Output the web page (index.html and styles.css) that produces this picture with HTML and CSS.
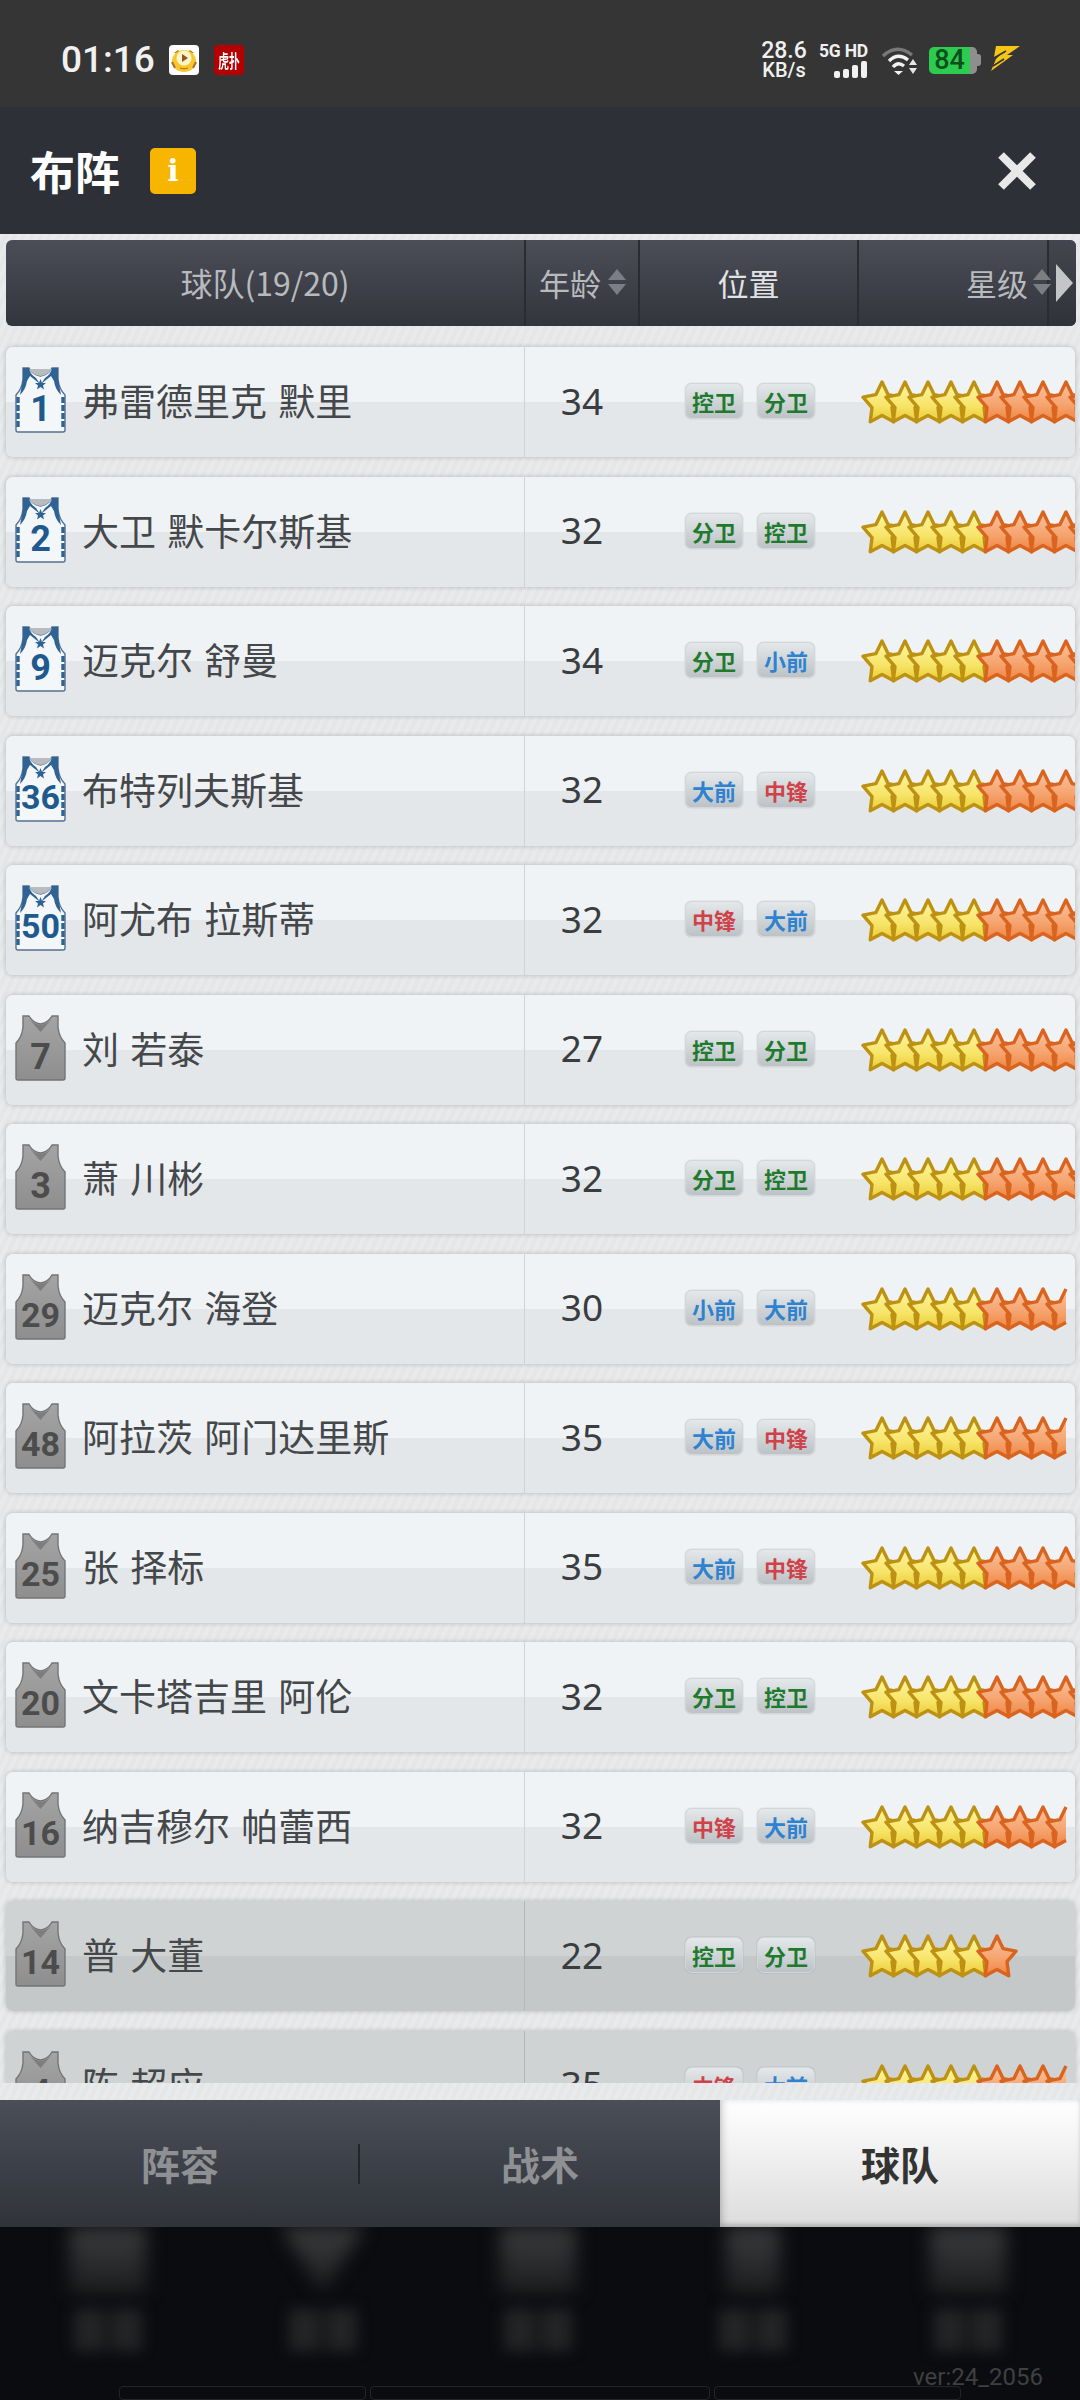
FILE: index.html
```html
<!DOCTYPE html>
<html>
  <head>
    <meta charset="utf-8" />
    <title>布阵</title>
    <link rel="stylesheet" href="styles.css">
  </head>
  <body>
    <svg class="defs" width="0" height="0">
      <defs>
        <linearGradient id="goldFill" x1="0" y1="0" x2="0" y2="1">
          <stop offset="0" stop-color="#fdf6a4" />
          <stop offset="0.6" stop-color="#f7e468" />
          <stop offset="1" stop-color="#e8ca34" />
        </linearGradient>
        <linearGradient id="orangeFill" x1="0" y1="0" x2="0" y2="1">
          <stop offset="0" stop-color="#fac3a0" />
          <stop offset="0.6" stop-color="#f5a26c" />
          <stop offset="1" stop-color="#ee8542" />
        </linearGradient>
        <linearGradient id="greyShirt" x1="0" y1="0" x2="0" y2="1">
          <stop offset="0" stop-color="#a4a4a4" />
          <stop offset="1" stop-color="#8e8e8e" />
        </linearGradient>
        <polygon id="star" points="21,2 27.17,14.7 40.02,17.2 30.99,27.55 32.76,41.8 21,35.5 9.24,41.8 11.01,27.55 1.98,17.2 14.83,14.7" />
        <g id="goldStar"><use href="#star" class="star-gold" /></g>
        <g id="orangeStar"><use href="#star" class="star-orange" /></g>
        <g id="fiveGold">
          <use href="#goldStar" x="0" />
          <use href="#goldStar" x="23" />
          <use href="#goldStar" x="46" />
          <use href="#goldStar" x="69" />
          <use href="#goldStar" x="92" />
        </g>
        <g id="stars-6">
          <use href="#fiveGold" />
          <use href="#orangeStar" x="115" />
        </g>
        <g id="stars-8">
          <use href="#stars-6" />
          <use href="#orangeStar" x="138" />
          <use href="#orangeStar" x="161" />
        </g>
        <g id="stars-9">
          <use href="#stars-8" />
          <use href="#orangeStar" x="184" />
        </g>
        <g id="stars-10">
          <use href="#stars-9" />
          <use href="#orangeStar" x="207" />
        </g>
        <g id="stars-half">
          <use href="#stars-8" />
          <path class="star-orange" transform="translate(184 0)" d="M21 2L14.83 14.7L1.98 17.2L11.01 27.55L9.24 41.8L21 35.5" />
        </g>
        <g id="shirtHome">
          <path d="M8 1L14 1Q18 8 25.5 9Q33 8 37 1L43 1L43 12Q44 22 50 28L50 63Q50 65 48 65L3 65Q1 65 1 63L1 28Q7 22 8 12Z" fill="#f3f7fa" stroke="#55708e" stroke-width="1.4" />
          <path d="M14 2Q18 8 25.5 9Q33 8 37 2Z" fill="#b9bcbf" />
          <path d="M8 1L14 1Q15 7 21 11L25 17L15 9L12 14Q11 22 5 28L8 12Z" fill="#2f6394" />
          <path d="M43 1L37 1Q36 7 30 11L26 17L36 9L39 14Q40 22 46 28L43 12Z" fill="#2f6394" />
          <polygon points="25.5,12 27,16 31,16 28,18.5 29,22.5 25.5,20 22,22.5 23,18.5 20,16 24,16" fill="#2f6394" />
          <path d="M3 30L3 62M48 30L48 62" stroke="#2f6394" stroke-width="3.4" stroke-dasharray="6 2" fill="none" />
        </g>
        <g id="shirtAway">
          <path d="M8 1L14 1Q18 8 25.5 9Q33 8 37 1L43 1L43 12Q44 22 50 28L50 63Q50 65 48 65L3 65Q1 65 1 63L1 28Q7 22 8 12Z" fill="url(#greyShirt)" stroke="#747474" stroke-width="1.4" />
          <path d="M15 5Q19 9 25.5 10Q32 9 36 5L25.5 17Z" fill="#7d7d7d" />
        </g>
      </defs>
    </svg>

    <div class="status-bar">
      <span class="clock">01:16</span>
      <svg class="app-icon" viewBox="0 0 30 30">
        <rect width="30" height="30" rx="4" fill="#fff" />
        <path d="M5 8L9 5L12 8M25 8L21 5L18 8" fill="#a8702c" />
        <ellipse cx="15" cy="16" rx="12" ry="11" fill="#f7c92e" />
        <circle cx="15" cy="13" r="7.5" fill="#fff4c8" />
        <polygon points="13,9 13,17 19,13" fill="#8a5726" />
        <path d="M3 17L6 23M27 17L24 23" stroke="#a8702c" stroke-width="2" />
        <path d="M11 23Q15 25 19 23" stroke="#a8702c" stroke-width="1" fill="none" />
      </svg>
      <div class="app-badge"><span>虎扑</span></div>
      <div class="status-right">
        <div class="net-speed">
          <span class="speed-num">28.6</span>
          <span class="speed-unit">KB/s</span>
        </div>
        <div class="net-type">
          <span>5G HD</span>
          <div class="signal">
            <i class="bar-1"></i><i class="bar-2"></i><i class="bar-3"></i><i class="bar-4"></i>
          </div>
        </div>
        <svg class="wifi" viewBox="0 0 36 29" width="36" height="29">
          <path d="M2 10Q16 -3 31 9" stroke="#787878" stroke-width="3.4" fill="none" />
          <path d="M8 15Q17 6 27 14" stroke="#f2f2f2" stroke-width="3.4" fill="none" />
          <path d="M12 21Q17 15 23 20" stroke="#f2f2f2" stroke-width="3.4" fill="none" />
          <polygon points="13,25 22,25 17.5,29" fill="#f2f2f2" />
          <polygon points="32,13 36,19 28,19" fill="#e6e6e6" />
          <polygon points="28,22 36,22 32,28" fill="#e6e6e6" />
        </svg>
        <div class="battery">
          <div class="battery-body"><span>84</span></div>
          <i class="battery-nub"></i>
        </div>
        <svg class="bolt" viewBox="0 0 29 25" width="29" height="25">
          <polygon points="5,0 29,0 16,9 22,9 0,25 5,13 9,9 3,11" fill="#f5c518" />
          <path d="M3 12L15 5M2 20L13 13" stroke="#353535" stroke-width="1.6" />
        </svg>
      </div>
    </div>

    <div class="title-bar">
      <h1>布阵</h1>
      <span class="info-badge">i</span>
      <svg class="close" viewBox="0 0 40 40" width="40" height="40">
        <path d="M4 4L36 36M36 4L4 36" stroke="#e8e8e8" stroke-width="8" />
      </svg>
    </div>

    <div class="panel">
      <div class="table-head">
        <div class="head-cell head-team">球队(19/20)</div>
        <div class="head-cell head-age">年龄<i class="sort"></i></div>
        <div class="head-cell head-pos">位置</div>
        <div class="head-cell head-stars">星级<i class="sort"></i></div>
        <div class="head-more"><i></i></div>
      </div>

      <div class="list">
        <div class="row">
          <div class="cell-name"><svg class="shirt"><use href="#shirtHome" /><text x="25.5" y="54" class="no no-home">1</text></svg><span>弗雷德里克 默里</span></div>
          <div class="cell-age">34</div>
          <div class="cell-pos"><span class="tag guard">控卫</span><span class="tag guard">分卫</span></div>
          <svg class="stars"><use href="#stars-10" /></svg>
        </div>
        <div class="row">
          <div class="cell-name"><svg class="shirt"><use href="#shirtHome" /><text x="25.5" y="54" class="no no-home">2</text></svg><span>大卫 默卡尔斯基</span></div>
          <div class="cell-age">32</div>
          <div class="cell-pos"><span class="tag guard">分卫</span><span class="tag guard">控卫</span></div>
          <svg class="stars"><use href="#stars-10" /></svg>
        </div>
        <div class="row">
          <div class="cell-name"><svg class="shirt"><use href="#shirtHome" /><text x="25.5" y="54" class="no no-home">9</text></svg><span>迈克尔 舒曼</span></div>
          <div class="cell-age">34</div>
          <div class="cell-pos"><span class="tag guard">分卫</span><span class="tag forward">小前</span></div>
          <svg class="stars"><use href="#stars-10" /></svg>
        </div>
        <div class="row">
          <div class="cell-name"><svg class="shirt"><use href="#shirtHome" /><text x="25.5" y="53" class="no no-home two">36</text></svg><span>布特列夫斯基</span></div>
          <div class="cell-age">32</div>
          <div class="cell-pos"><span class="tag forward">大前</span><span class="tag center">中锋</span></div>
          <svg class="stars"><use href="#stars-9" /></svg>
        </div>
        <div class="row">
          <div class="cell-name"><svg class="shirt"><use href="#shirtHome" /><text x="25.5" y="53" class="no no-home two">50</text></svg><span>阿尤布 拉斯蒂</span></div>
          <div class="cell-age">32</div>
          <div class="cell-pos"><span class="tag center">中锋</span><span class="tag forward">大前</span></div>
          <svg class="stars"><use href="#stars-10" /></svg>
        </div>
        <div class="row">
          <div class="cell-name"><svg class="shirt"><use href="#shirtAway" /><text x="25.5" y="54" class="no">7</text></svg><span>刘 若泰</span></div>
          <div class="cell-age">27</div>
          <div class="cell-pos"><span class="tag guard">控卫</span><span class="tag guard">分卫</span></div>
          <svg class="stars"><use href="#stars-10" /></svg>
        </div>
        <div class="row">
          <div class="cell-name"><svg class="shirt"><use href="#shirtAway" /><text x="25.5" y="54" class="no">3</text></svg><span>萧 川彬</span></div>
          <div class="cell-age">32</div>
          <div class="cell-pos"><span class="tag guard">分卫</span><span class="tag guard">控卫</span></div>
          <svg class="stars"><use href="#stars-10" /></svg>
        </div>
        <div class="row">
          <div class="cell-name"><svg class="shirt"><use href="#shirtAway" /><text x="25.5" y="53" class="no two">29</text></svg><span>迈克尔 海登</span></div>
          <div class="cell-age">30</div>
          <div class="cell-pos"><span class="tag forward">小前</span><span class="tag forward">大前</span></div>
          <svg class="stars"><use href="#stars-half" /></svg>
        </div>
        <div class="row">
          <div class="cell-name"><svg class="shirt"><use href="#shirtAway" /><text x="25.5" y="53" class="no two">48</text></svg><span>阿拉茨 阿门达里斯</span></div>
          <div class="cell-age">35</div>
          <div class="cell-pos"><span class="tag forward">大前</span><span class="tag center">中锋</span></div>
          <svg class="stars"><use href="#stars-half" /></svg>
        </div>
        <div class="row">
          <div class="cell-name"><svg class="shirt"><use href="#shirtAway" /><text x="25.5" y="53" class="no two">25</text></svg><span>张 择标</span></div>
          <div class="cell-age">35</div>
          <div class="cell-pos"><span class="tag forward">大前</span><span class="tag center">中锋</span></div>
          <svg class="stars"><use href="#stars-9" /></svg>
        </div>
        <div class="row">
          <div class="cell-name"><svg class="shirt"><use href="#shirtAway" /><text x="25.5" y="53" class="no two">20</text></svg><span>文卡塔吉里 阿伦</span></div>
          <div class="cell-age">32</div>
          <div class="cell-pos"><span class="tag guard">分卫</span><span class="tag guard">控卫</span></div>
          <svg class="stars"><use href="#stars-10" /></svg>
        </div>
        <div class="row">
          <div class="cell-name"><svg class="shirt"><use href="#shirtAway" /><text x="25.5" y="53" class="no two">16</text></svg><span>纳吉穆尔 帕蕾西</span></div>
          <div class="cell-age">32</div>
          <div class="cell-pos"><span class="tag center">中锋</span><span class="tag forward">大前</span></div>
          <svg class="stars"><use href="#stars-half" /></svg>
        </div>
        <div class="row row-off">
          <div class="cell-name"><svg class="shirt"><use href="#shirtAway" /><text x="25.5" y="53" class="no two">14</text></svg><span>普 大董</span></div>
          <div class="cell-age">22</div>
          <div class="cell-pos"><span class="tag guard">控卫</span><span class="tag guard">分卫</span></div>
          <svg class="stars"><use href="#stars-6" /></svg>
        </div>
        <div class="row row-off">
          <div class="cell-name"><svg class="shirt"><use href="#shirtAway" /><text x="25.5" y="54" class="no">4</text></svg><span>陈 超应</span></div>
          <div class="cell-age">35</div>
          <div class="cell-pos"><span class="tag center">中锋</span><span class="tag forward">大前</span></div>
          <svg class="stars"><use href="#stars-half" /></svg>
        </div>
      </div>
    </div>

    <div class="tabs">
      <div class="tab tab-first">阵容</div>
      <div class="tab">战术</div>
      <div class="tab tab-on">球队</div>
    </div>

    <div class="dock">
      <div class="dock-items">
        <div class="dock-item"><i class="ghost-icon"></i><i class="ghost-label"></i></div>
        <div class="dock-item"><i class="ghost-v"><b></b></i><i class="ghost-label"></i></div>
        <div class="dock-item"><i class="ghost-icon"></i><i class="ghost-label"></i></div>
        <div class="dock-item"><i class="ghost-icon ghost-small"></i><i class="ghost-label"></i></div>
        <div class="dock-item"><i class="ghost-icon"></i><i class="ghost-label"></i></div>
      </div>
      <div class="dock-slots"><i class="slot"></i><i class="slot slot-wide"></i><i class="slot"></i></div>
      <span class="version">ver:24_2056</span>
    </div>
  </body>
</html>
```

FILE: styles.css
```css
html {
  margin: 0px;
  padding: 0px;
}
body {
  font-family: 'Noto Sans CJK SC', 'Noto Sans', sans-serif;
  margin: 0px;
  padding: 0px;
  width: 1080px;
  height: 2400px;
  overflow: hidden;
  display: flex;
  flex-direction: column;
  background-color: #0b0c0f;
}
.defs {
  position: absolute;
}
i {
  display: block;
}

/* status bar */
.status-bar {
  height: 107px;
  flex: none;
  display: flex;
  align-items: center;
  padding: 13px 60px 0px 61px;
  background-color: #353535;
  color: #f0f0f0;
  box-sizing: border-box;
}
.clock {
  font-family: 'Roboto', sans-serif;
  font-size: 37px;
  font-weight: 500;
  width: 108px;
  margin-top: -1px;
}
.app-icon {
  width: 30px;
  height: 30px;
  margin-right: 15px;
}
.app-badge {
  width: 30px;
  height: 30px;
  line-height: 30px;
  border-radius: 4px;
  background-color: #b40000;
  color: #fff;
  font-size: 18px;
  font-weight: 700;
  text-align: center;
  overflow: hidden;
}
.app-badge span {
  display: block;
  white-space: nowrap;
  margin-left: -3px;
  width: 36px;
  transform: scaleX(0.6);
}
.status-right {
  margin-left: auto;
  display: flex;
  align-items: center;
}
.net-speed {
  display: flex;
  flex-direction: column;
  align-items: center;
  font-family: 'Roboto', sans-serif;
  font-weight: 500;
  width: 46px;
  margin-right: 12px;
}
.speed-num {
  font-size: 23px;
  line-height: 21px;
}
.speed-unit {
  font-size: 20px;
  line-height: 19px;
}
.net-type {
  width: 48px;
  margin-right: 14px;
  font-family: 'Roboto', sans-serif;
  font-size: 17.5px;
  font-weight: 700;
  letter-spacing: -0.2px;
  line-height: 17px;
  white-space: nowrap;
}
.signal {
  display: flex;
  justify-content: flex-end;
  align-items: flex-end;
  gap: 3px;
  height: 17px;
  margin-top: 1px;
}
.signal i {
  width: 6px;
  background-color: #f2f2f2;
  border-radius: 2px;
}
.bar-1 {
  height: 7px;
}
.bar-2 {
  height: 9px;
}
.bar-3 {
  height: 13px;
}
.bar-4 {
  height: 17px;
}
.wifi {
  margin-right: 12px;
}
.battery {
  display: flex;
  align-items: center;
  margin-right: 10px;
}
.battery-body {
  width: 48px;
  height: 27px;
  border-radius: 5px;
  background: linear-gradient(90deg, #2dcb4f 41px, #8e8e8e 41px);
}
.battery-body span {
  display: block;
  width: 41px;
  text-align: center;
  font-family: 'Roboto', sans-serif;
  font-size: 27px;
  font-weight: 500;
  line-height: 27px;
  color: #0c4f1c;
}
.battery-nub {
  width: 4px;
  height: 12px;
  background-color: #8e8e8e;
  border-radius: 0px 3px 3px 0px;
}
.bolt {
  margin-bottom: 3px;
}

/* title */
.title-bar {
  height: 127px;
  flex: none;
  display: flex;
  align-items: center;
  padding: 0px 43px 0px 30px;
  background-color: #2d3037;
  box-sizing: border-box;
}
.title-bar h1 {
  margin: 0px 30px 0px 0px;
  font-size: 45px;
  font-weight: 700;
  line-height: 50px;
  color: #fff;
}
.info-badge {
  width: 46px;
  height: 46px;
  line-height: 46px;
  border-radius: 5px;
  background-color: #f8b500;
  color: #fff;
  font-family: 'DejaVu Serif', serif;
  font-size: 30px;
  font-weight: 700;
  text-align: center;
}
.close {
  margin-left: auto;
}

/* table */
.panel {
  height: 1866px;
  flex: none;
  display: flex;
  flex-direction: column;
  box-sizing: border-box;
  padding: 6px 0px 17px 0px;
  background: repeating-linear-gradient(115deg, #e9eaec 0px, #e9eaec 4px, #e5e6e8 4px, #e5e6e8 8px);
}
.table-head {
  height: 86px;
  flex: none;
  margin: 0px 4px 0px 6px;
  display: flex;
  border-radius: 6px;
  background: linear-gradient(#4b4e57, #32353c);
  color: #b8babd;
  font-size: 31px;
  overflow: hidden;
}
.head-cell {
  display: flex;
  align-items: center;
  box-sizing: border-box;
  border-right: 2px solid #2a2c32;
  padding-bottom: 2px;
}
.head-team {
  width: 520px;
  justify-content: center;
  font-size: 32px;
}
.head-age {
  width: 114px;
  padding-left: 13px;
  gap: 7px;
}
.head-pos {
  width: 219px;
  justify-content: center;
  color: #e2e3e5;
}
.head-stars {
  width: 188px;
  justify-content: flex-end;
  gap: 5px;
  border-right: none;
}
.head-stars .sort {
  margin-right: -4px;
  z-index: 1;
}
.sort {
  width: 0px;
  border-left: 9px solid transparent;
  border-right: 9px solid transparent;
  border-bottom: 11px solid #7c7e83;
  position: relative;
  height: 0px;
  margin-bottom: 15px;
}
.sort::after {
  content: "";
  position: absolute;
  left: -9px;
  top: 15px;
  border-left: 9px solid transparent;
  border-right: 9px solid transparent;
  border-top: 11px solid #7c7e83;
}
.head-more {
  flex: 1;
  display: flex;
  align-items: center;
  justify-content: center;
  border-left: 2px solid #2a2c32;
  background: linear-gradient(#43464e, #2f3238);
}
.head-more i {
  border-left: 17px solid #c4c5c8;
  border-top: 19px solid transparent;
  border-bottom: 19px solid transparent;
  margin-left: 4px;
}
.list {
  flex: 1;
  min-height: 0px;
  overflow: hidden;
  display: flex;
  flex-direction: column;
  gap: 19.5px;
  padding: 21px 5px 0px 6px;
}
.row {
  height: 110px;
  flex: none;
  display: flex;
  align-items: center;
  border-radius: 7px;
  overflow: hidden;
  color: #45484b;
  background: linear-gradient(#eff3f5 50%, #e4e7e9 50%);
  box-shadow: 0px 0px 5px rgba(0, 0, 0, 0.22);
}
.row-off {
  background: linear-gradient(#cfd3d4 50%, #c4c8c9 50%);
}
.cell-name {
  width: 519px;
  height: 100%;
  flex: none;
  display: flex;
  align-items: center;
  gap: 16px;
  padding-left: 9px;
  box-sizing: border-box;
  font-size: 37px;
  word-spacing: 3px;
  border-right: 1px solid #cfd3d5;
  white-space: nowrap;
}
.cell-name span {
  margin-bottom: 4px;
}
.row-off .cell-name {
  border-right-color: #b4b8b9;
}
.shirt {
  width: 51px;
  height: 66px;
  flex: none;
  margin-bottom: 4px;
}
.no {
  font-family: 'Roboto', sans-serif;
  font-size: 36px;
  font-weight: 700;
  fill: #4c4c4c;
  text-anchor: middle;
}
.no.two {
  font-size: 34px;
}
.no-home {
  fill: #1f5a8e;
}
.cell-age {
  width: 114px;
  flex: none;
  text-align: center;
  font-family: 'Noto Sans', sans-serif;
  font-size: 37px;
  color: #3a3d40;
  margin-bottom: 4px;
}
.cell-pos {
  width: 219px;
  flex: none;
  display: flex;
  gap: 14px;
  padding-left: 46px;
  box-sizing: border-box;
  margin-bottom: 2px;
}
.tag {
  width: 58px;
  height: 36px;
  line-height: 34px;
  box-sizing: border-box;
  border: 1px solid #d3d7d9;
  border-radius: 7px;
  background: linear-gradient(#e4e8ea, #bcc2c6);
  box-shadow: 0px 0px 1px rgba(0, 0, 0, 0.4);
  text-align: center;
  font-size: 22px;
  font-weight: 700;
}
.guard {
  color: #1f7a2e;
}
.forward {
  color: #2f82d0;
}
.center {
  color: #d0424a;
}
.stars {
  width: 214px;
  height: 46px;
  flex: none;
  margin-left: 3px;
  margin-top: 2px;
  filter: blur(0.4px);
}
.star-gold {
  fill: url(#goldFill);
  stroke: #bd9214;
  stroke-width: 3.4;
  stroke-linejoin: round;
}
.star-orange {
  fill: url(#orangeFill);
  stroke: #d9641f;
  stroke-width: 3.4;
  stroke-linejoin: round;
}

/* bottom tabs */
.tabs {
  height: 127px;
  flex: none;
  display: flex;
  background: linear-gradient(#4a4e57, #30333a);
}
.tab {
  width: 360px;
  display: flex;
  align-items: center;
  justify-content: center;
  color: #8e9093;
  font-size: 39px;
  font-weight: 700;
  position: relative;
  padding-bottom: 2px;
  box-sizing: border-box;
}
.tab-first::after {
  content: "";
  position: absolute;
  right: 0px;
  top: 44px;
  width: 2px;
  height: 40px;
  background-color: #23252a;
}
.tab-on {
  color: #333;
  background: linear-gradient(#fff, #dcdcdc);
  box-shadow: inset 0px -3px 4px rgba(0, 0, 0, 0.15), inset 4px 0px 6px rgba(0, 0, 0, 0.12);
}

/* what shows of the game screen under the sheet */
.dock {
  flex: 1;
  position: relative;
  overflow: hidden;
  display: flex;
  flex-direction: column;
}
.dock-items {
  display: flex;
  height: 162px;
}
.dock-item {
  width: 215px;
  display: flex;
  flex-direction: column;
  align-items: center;
}
.ghost-icon {
  width: 76px;
  height: 66px;
  background: linear-gradient(#3a3b3d, #1d1e20);
  filter: blur(9px);
  margin-bottom: 16px;
}
.ghost-small {
  width: 54px;
}
.ghost-v {
  width: 84px;
  height: 66px;
  filter: blur(9px);
  margin-bottom: 16px;
}
.ghost-v b {
  display: block;
  height: 100%;
  background: linear-gradient(#3a3b3d, #1d1e20);
  clip-path: polygon(0% 0%, 100% 0%, 50% 100%);
}
.ghost-label {
  width: 68px;
  height: 42px;
  background: linear-gradient(90deg, #232426 42%, #0b0c0f 50%, #232426 58%);
  filter: blur(7px);
}
.dock-slots {
  display: flex;
  justify-content: center;
  gap: 4px;
}
.slot {
  width: 247px;
  height: 14px;
  box-sizing: border-box;
  border: 1px solid #232427;
  border-radius: 4px;
}
.slot-wide {
  width: 340px;
}
.version {
  position: absolute;
  right: 37px;
  bottom: 8px;
  font-family: 'Roboto', sans-serif;
  font-size: 24px;
  line-height: 30px;
  color: #3e4042;
}
```
